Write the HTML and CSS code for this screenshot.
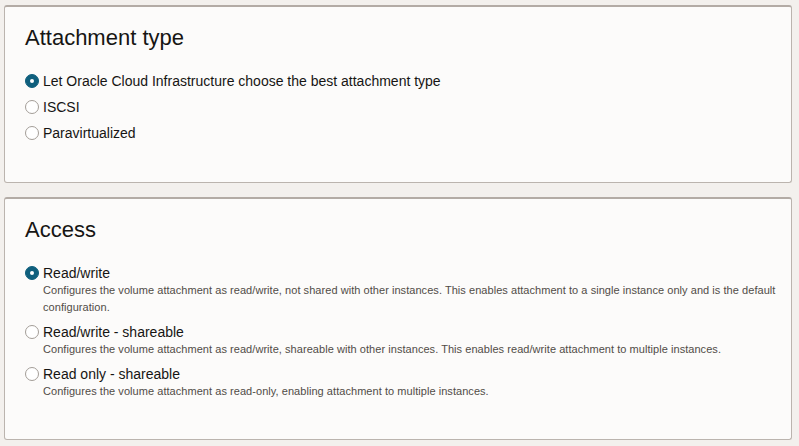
FILE: index.html
```html
<!DOCTYPE html>
<html lang="en">
<head>
<meta charset="utf-8">
<title>Attach volume</title>
<link rel="stylesheet" href="styles.css">
</head>
<body>
<main class="page">
  <section class="card card-type">
    <h2 class="card-title">Attachment type</h2>
    <div class="radio-group group-tight">
      <label class="option">
        <span class="radio checked"></span>
        <span class="option-label">Let Oracle Cloud Infrastructure choose the best attachment type</span>
      </label>
      <label class="option">
        <span class="radio"></span>
        <span class="option-label">ISCSI</span>
      </label>
      <label class="option">
        <span class="radio"></span>
        <span class="option-label">Paravirtualized</span>
      </label>
    </div>
  </section>

  <section class="card card-access">
    <h2 class="card-title">Access</h2>
    <div class="radio-group group-desc">
      <div class="option-block">
        <label class="option">
          <span class="radio checked"></span>
          <span class="option-label">Read/write</span>
        </label>
        <p class="option-desc">Configures the volume attachment as read/write, not shared with other instances. This enables attachment to a single instance only and is the default configuration.</p>
      </div>
      <div class="option-block">
        <label class="option">
          <span class="radio"></span>
          <span class="option-label">Read/write - shareable</span>
        </label>
        <p class="option-desc">Configures the volume attachment as read/write, shareable with other instances. This enables read/write attachment to multiple instances.</p>
      </div>
      <div class="option-block">
        <label class="option">
          <span class="radio"></span>
          <span class="option-label">Read only - shareable</span>
        </label>
        <p class="option-desc">Configures the volume attachment as read-only, enabling attachment to multiple instances.</p>
      </div>
    </div>
  </section>
</main>
</body>
</html>
```

FILE: styles.css
```css
html, body {
  margin: 0;
  padding: 0;
  background: #f3f0ed;
}

body {
  font-family: "Liberation Sans", Arial, Helvetica, sans-serif;
  color: #161513;
}

.page {
  display: flex;
  flex-direction: column;
  gap: 14px;
  padding: 5px 7px 0 4px;
}

.card {
  background: #fcfbfa;
  border: 1px solid #bbb4ae;
  border-top: 2px solid #b3aba5;
  border-radius: 3px;
  padding: 18px 10px 0 20px;
  box-sizing: border-box;
}

.card-type {
  height: 178px;
}

.card-access {
  height: 243px;
}

.card-title {
  margin: 0;
  font-size: 22px;
  line-height: 26px;
  font-weight: 400;
  color: #161513;
}

.radio-group {
  display: flex;
  flex-direction: column;
}

.group-tight {
  margin-top: 21px;
  gap: 8px;
}

.group-desc {
  margin-top: 21px;
  gap: 7px;
}

.option {
  display: flex;
  align-items: center;
  gap: 4px;
  font-size: 14px;
  line-height: 18px;
  color: #161513;
}

.radio {
  flex: none;
  width: 14px;
  height: 14px;
  box-sizing: border-box;
  border-radius: 50%;
  border: 1px solid #a39d97;
  background: #ffffff;
  position: relative;
}

.radio.checked {
  background: #0f5f7d;
  border-color: #0f5f7d;
}

.radio.checked::after {
  content: "";
  position: absolute;
  left: 4px;
  top: 4px;
  width: 4px;
  height: 4px;
  border-radius: 50%;
  background: #ffffff;
}

.option-desc {
  margin: 0 0 0 18px;
  font-size: 11px;
  line-height: 17px;
  letter-spacing: 0.05px;
  color: #514c47;
}
```
